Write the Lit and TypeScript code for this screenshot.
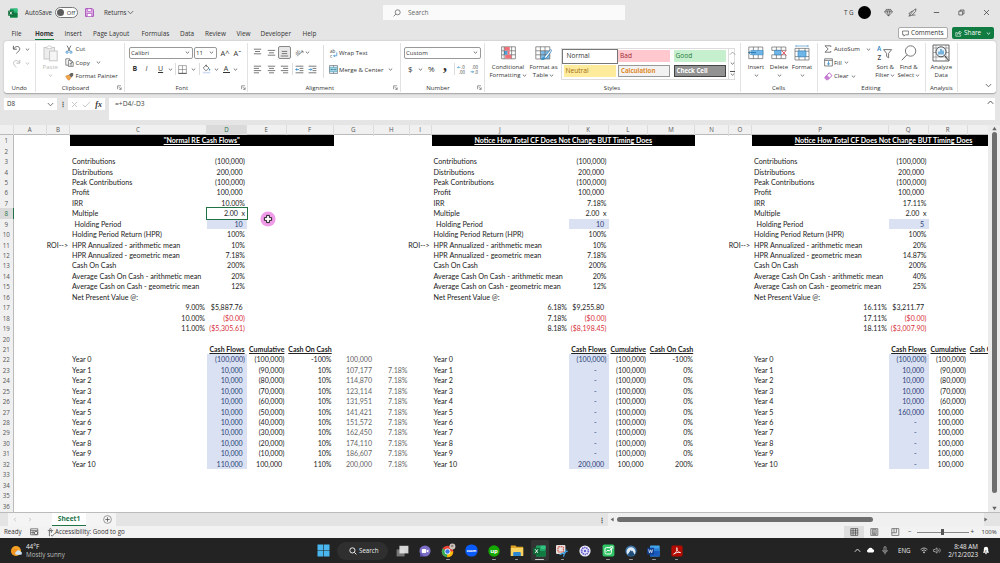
import { LitElement, html, css, svg, nothing } from 'lit';
import type { TemplateResult } from 'lit';
import { customElement, property } from 'lit/decorators.js';
import { classMap } from 'lit/directives/class-map.js';

interface Glyph {
  w: number;
  h: number;
  body: TemplateResult;
}

const G = '#5a5a5a';
const B = '#2b88c8';

const lines = (rows: number[][]) =>
  svg`${rows.map(([x1, x2, y]) => svg`<path d="M${x1} ${y}H${x2}" stroke=${G} stroke-width=".8"/>`)}`;

const GLYPHS: Record<string, Glyph> = {
  chevron: { w: 5, h: 3, body: svg`<path d="M.8 .6L2.5 2.2L4.2 .6" fill="none" stroke="#555" stroke-width=".8"/>` },
  chevronWide: { w: 7, h: 5, body: svg`<path d="M.8 1L3.5 3.8L6.2 1" fill="none" stroke="#555" stroke-width=".8"/>` },
  chevronUp: { w: 7, h: 5, body: svg`<path d="M.8 3.8L3.5 1L6.2 3.8" fill="none" stroke="currentColor" stroke-width=".9"/>` },
  excel: {
    w: 10, h: 10,
    body: svg`<rect x="2" y=".5" width="7.5" height="9" rx=".6" fill="#21a366"/><path d="M5.7 .5h3.2a.6.6 0 0 1 .6.6v2.4H5.7z" fill="#33c481"/><path d="M2 5h7.5v4.5H2z" fill="#107c41"/><rect x=".2" y="2.4" width="5.4" height="5.4" rx=".5" fill="#0e6b38"/><path d="M1.8 3.6L4 6.6M4 3.6L1.8 6.6" stroke="#fff" stroke-width=".8"/>`,
  },
  save: {
    w: 9, h: 9,
    body: svg`<path d="M.6 .6h6.6l1.2 1.2v6.6H.6z" fill="#e6b8ea" stroke="#a344b5" stroke-width=".9"/><path d="M2.4 .8h4v2.6h-4z" fill="#fff" stroke="#a344b5" stroke-width=".6"/><path d="M2.2 8.2V5.4h4.6v2.8" fill="#fff" stroke="#a344b5" stroke-width=".7"/>`,
  },
  search: { w: 8, h: 8, body: svg`<circle cx="4.7" cy="3.3" r="2.5" fill="none" stroke="#555" stroke-width=".7"/><path d="M2.9 5.1L.6 7.4" stroke="#555" stroke-width=".7"/>` },
  diamond: { w: 9, h: 9, body: svg`<path d="M2.4 1.4h4.2l1.9 2.4L4.5 8.2L.5 3.8zM.5 3.8h8M2.4 1.4l.8 2.4l1.3 4.2l1.3-4.2l.8-2.4M3.2 3.8L4.5 1.4l1.3 2.4" fill="none" stroke="#444" stroke-width=".6"/>` },
  pen: { w: 9, h: 9, body: svg`<path d="M.8 8.2L5.8 2.2L8 .8L7.6 3.4L4 7.2zM2.2 6.5L.8 5.6L4.5 2.8M4 7.2L7.4 7" fill="none" stroke="#444" stroke-width=".7"/>` },
  minimize: { w: 7, h: 7, body: svg`<path d="M.8 3.5h5.4" stroke="#444" stroke-width=".8"/>` },
  restore: { w: 7, h: 7, body: svg`<path d="M.8 2.2h3.8v3.8H.8zM2.2 2.2V1h3.8v3.8H4.8" fill="none" stroke="#444" stroke-width=".7"/>` },
  close: { w: 7, h: 7, body: svg`<path d="M1 1l5 5M6 1L1 6" stroke="#333" stroke-width=".7"/>` },
  comment: { w: 7, h: 7, body: svg`<path d="M.6 1h5.8v3.8H3.4L2 6.2V4.8H.6z" fill="none" stroke="#333" stroke-width=".6"/>` },
  share: { w: 7, h: 7, body: svg`<path d="M2.4 2.6H.8v3.6h4.8V4.6M2.2 4.4C2.4 2.8 3.4 2.2 4.6 2.2V1L6.4 2.8L4.6 4.4V3.2C3.6 3.2 2.8 3.6 2.2 4.4z" fill="none" stroke="#fff" stroke-width=".6"/>` },
  undo: { w: 10, h: 9, body: svg`<path d="M1.4 .8v3.4h3.4M1.6 4C3 1.6 5.4 .8 7 2.2C8.6 3.8 7.6 5.6 4.4 8.4" fill="none" stroke="#555" stroke-width=".9"/>` },
  redo: { w: 10, h: 9, body: svg`<path d="M7.8 .8v3.4H4.4M7.6 4C6.2 1.6 4 .8 2.4 2.2C.8 3.8 1.4 5.6 4.4 8.4" fill="none" stroke="#b9b9b9" stroke-width=".9"/>` },
  paste: { w: 15, h: 17, body: svg`<rect x="1" y="2.5" width="10.5" height="11.5" fill="#ececec" stroke="#bdbdbd" stroke-width=".9"/><path d="M3.6 3.6V1.8h1.4a1.3 1.3 0 0 1 2.6 0H9v1.8z" fill="#fff" stroke="#bdbdbd" stroke-width=".7"/><rect x="6.6" y="6" width="7.6" height="9.8" fill="#f4f4f4" stroke="#bdbdbd" stroke-width=".9"/>` },
  cut: { w: 8, h: 9, body: svg`<path d="M2 .6L5 6M6 .6L3 6" stroke="#555" stroke-width=".8"/><circle cx="2.1" cy="7.2" r="1.1" fill="none" stroke=${B} stroke-width=".8"/><circle cx="5.9" cy="7.2" r="1.1" fill="none" stroke=${B} stroke-width=".8"/>` },
  copy: { w: 9, h: 9, body: svg`<path d="M3.4 7.2H.8V.8h4v1.6M3.4 2.4h3l1.8 1.8v4.2H3.4zM6 2.6v1.8h2M4.6 5.6h2.4M4.6 7h2.4" fill="none" stroke=${G} stroke-width=".7"/>` },
  painter: { w: 9, h: 9, body: svg`<path d="M.8 4L4 3l2 2.4L4.2 8.2C2.6 7.8 1.2 6.2.8 4z" fill="#f3a64a" stroke="#c4711c" stroke-width=".5"/><path d="M4 2.8l2.4 2.8L8.2 3.4V1H5.8z" fill="#666"/>` },
  launcher: { w: 5, h: 5, body: svg`<path d="M.6 4.2V.8h3.4M2 2.2l2 2M4.2 2.4v2H2.2" fill="none" stroke="#555" stroke-width=".6"/>` },
  borders: { w: 9, h: 9, body: svg`<path d="M.6 .6h7.8v7.8H.6zM4.5 .6v7.8M.6 4.5h7.8" fill="none" stroke="#777" stroke-width=".6"/><path d="M.4 8.4h8.2" stroke="#444" stroke-width=".8"/>` },
  bucket: { w: 9, h: 10, body: svg`<path d="M4 1L7 4L4 6.8L1.2 4zM4.2 3V.6" fill="none" stroke="#555" stroke-width=".7"/><path d="M7.6 4.4c1 1.2 1 2-.1 2s-.8-1 .1-2z" fill=${B}/><path d="M.8 8.6h7.4" stroke="#cfdcf2" stroke-width="1.6"/>` },
  top: { w: 9, h: 9, body: lines([[.8, 8.2, 1.2], [2, 7, 3.5], [.8, 8.2, 5.8]]) },
  middle: { w: 9, h: 9, body: lines([[.8, 8.2, 2.4], [2, 7, 4.8], [.8, 8.2, 7.2]]) },
  bottom: { w: 9, h: 9, body: lines([[1.8, 7.2, 3.4], [1.8, 7.2, 5.6], [.8, 8.2, 8]]) },
  left: { w: 9, h: 9, body: lines([[.8, 8.2, 1.2], [.8, 6, 3.4], [.8, 8.2, 5.6], [.8, 6, 7.8]]) },
  center: { w: 9, h: 9, body: lines([[.8, 8.2, 1.2], [2, 7, 3.4], [.8, 8.2, 5.6], [2, 7, 7.8]]) },
  right: { w: 9, h: 9, body: lines([[.8, 8.2, 1.2], [3, 8.2, 3.4], [.8, 8.2, 5.6], [3, 8.2, 7.8]]) },
  orient: { w: 9, h: 9, body: svg`<text x="0" y="6" font-size="5" fill="#555" transform="rotate(-30 3 5)">ab</text><path d="M2 8.2L8 3M8 5V3H6" fill="none" stroke="#666" stroke-width=".7"/>` },
  outdent: { w: 9, h: 9, body: svg`${lines([[.6, 8.4, 1.2], [4.6, 8.4, 3.4], [4.6, 8.4, 5.6], [.6, 8.4, 7.8]])}<path d="M4 4.5H.8M2 3.2L.8 4.5L2 5.8" fill="none" stroke=${B} stroke-width=".8"/>` },
  indent: { w: 9, h: 9, body: svg`${lines([[.6, 8.4, 1.2], [4.6, 8.4, 3.4], [4.6, 8.4, 5.6], [.6, 8.4, 7.8]])}<path d="M.6 4.5h3.2M2.6 3.2L3.8 4.5L2.6 5.8" fill="none" stroke=${B} stroke-width=".8"/>` },
  wrap: { w: 9, h: 9, body: svg`<text x="1" y="4.2" font-size="4.6" fill="#444">ab</text><text x="1" y="8.8" font-size="4.6" fill="#444">c</text><path d="M7.8 3.4v3.4H4.6M5.8 5.6L4.6 6.8L5.8 8" fill="none" stroke=${B} stroke-width=".7"/>` },
  merge: { w: 9, h: 9, body: svg`<path d="M.5 .5h8v8h-8z" fill="#d4e9f7" stroke="#666" stroke-width=".6"/><path d="M4.5 .5v2M4.5 6.5v2" stroke="#666" stroke-width=".6"/><path d="M.8 2.6h7.4v3.8H.8z" fill="#bfe3f2" stroke="#2a8fa5" stroke-width=".5"/><path d="M2 4.5h5M3 3.5L2 4.5l1 1M6 3.5l1 1l-1 1" fill="none" stroke="#1b6f86" stroke-width=".6"/>` },
  decInc: { w: 9, h: 9, body: svg`<text x="4" y="4.2" font-size="4.4" fill="#444">.0</text><text x="1.8" y="8.8" font-size="4.4" fill="#444">.00</text><path d="M3.4 2.4H.6M1.6 1.4l-1 1l1 1" fill="none" stroke=${B} stroke-width=".6"/>` },
  decDec: { w: 9, h: 9, body: svg`<text x="1.8" y="4.2" font-size="4.4" fill="#444">.00</text><text x="4.4" y="8.8" font-size="4.4" fill="#444">.0</text><path d="M.6 6.8h3M2.6 5.8l1 1l-1 1" fill="none" stroke=${B} stroke-width=".7"/>` },
  conditional: {
    w: 15, h: 14,
    body: svg`<path d="M.6 .8h13.8v12H.6zM.6 4.8h13.8M.6 8.8h13.8M10.6 .8v12" fill="#fff" stroke="#666" stroke-width=".7"/><path d="M3.4 1h5.4v3.6H3.4zM4.2 9h6.2v3.6H4.2z" fill="#f07078"/><path d="M3 5h3.6v3.6H3z" fill="#4a9fd8"/><path d="M6.6 5h2v3.6h-2z" fill="#f07078"/><path d="M3.2 .8v12" stroke="#555" stroke-width=".6"/>`,
  },
  table: {
    w: 17, h: 15,
    body: svg`<path d="M.8 .8h14v12.2H.8z" fill="#fff"/><path d="M5.4 4.8h9.4V13H5.4z" fill="#7dbbe6"/><path d="M.8 .8h14v12.2H.8zM.8 4.8h14M.8 8.8h14M5.4 .8v12.2M10 .8v12.2" fill="none" stroke="#666" stroke-width=".7"/><path d="M15.8 3.4L9.8 10.4L7 13.6L11.4 12L16.6 4.8z" fill="#fff" stroke="#2276b0" stroke-width=".7"/><path d="M6 14c1-3 3-3.6 4.4-2.4c.2 1.6-1.8 2.8-4.4 2.4z" fill="#3d8fc9"/>`,
  },
  insert: {
    w: 16, h: 14,
    body: svg`<path d="M.8 1h14v11.6H.8zM5.4 1v11.6M10.2 1v11.6" fill="#fff" stroke="#666" stroke-width=".7"/><path d="M3.6 4.4H15v4.4H3.6z" fill="#6fb6e8" stroke="#2a7fba" stroke-width=".6"/><path d="M8 6.6H.8M3 4.4L.8 6.6L3 8.8" fill="none" stroke="#1f6ea8" stroke-width=".9"/>`,
  },
  remove: {
    w: 16, h: 14,
    body: svg`<path d="M.8 1h14v3.4H.8zM.8 8.8h14v3.8H.8zM5.4 1v3.4M10.2 1v3.4M5.4 8.8v3.8M10.2 8.8v3.8" fill="#fff" stroke="#666" stroke-width=".7"/><path d="M3.6 4.4h6.4v4.4H3.6z" fill="#6fb6e8" stroke="#2a7fba" stroke-width=".6"/><path d="M10.4 4.4l5 5M15.4 4.4l-5 5" stroke="#e0575f" stroke-width="1"/>`,
  },
  format: {
    w: 16, h: 16,
    body: svg`<path d="M2 1h12M2 0v2M14 0v2" stroke=${B} stroke-width=".6"/><path d="M1 3.4h14V15H1zM1 6.2h14M1 11.6h14M5 3.4V15M11 3.4V15" fill="#fff" stroke="#666" stroke-width=".7"/><path d="M4 6h8v5.8H4z" fill="#6fb6e8" stroke="#2a7fba" stroke-width=".6"/>`,
  },
  sigma: { w: 8, h: 8, body: svg`<path d="M6.8 2V.8H1L4.2 4L1 7.2h5.8V6" fill="none" stroke="#555" stroke-width=".8"/>` },
  fill: { w: 9, h: 9, body: svg`<path d="M.6 .8h7.8v7.2H.6zM.6 2.4h7.8" fill="#fff" stroke="#555" stroke-width=".7"/><path d="M4.5 3.2v3.6M3 5.4l1.5 1.4L6 5.4" fill="none" stroke=${B} stroke-width=".8"/>` },
  clear: { w: 9, h: 9, body: svg`<path d="M1 5L5.2 .8L8 3.6L3.8 7.8H2.6L1 6.2z" fill="#fff" stroke="#a13db3" stroke-width=".8"/><path d="M1 5l2-2l2.8 2.8l-2 2H2.6L1 6.2z" fill="#c77fd3"/>` },
  sort: { w: 16, h: 16, body: svg`<text x="0" y="6.2" font-size="6.4" font-weight="600" fill=${B}>A</text><text x=".4" y="15.2" font-size="6.4" font-weight="600" fill="#444">Z</text><path d="M6.6 4.6h8L11.6 8.4v4.4L9.6 11.4V8.4z" fill="#fff" stroke="#555" stroke-width=".8"/>` },
  find: { w: 16, h: 16, body: svg`<circle cx="9.6" cy="6" r="5.2" fill="none" stroke="#555" stroke-width=".8"/><path d="M6 9.8L.8 15.2" stroke="#555" stroke-width=".9"/>` },
  analyze: {
    w: 18, h: 18,
    body: svg`<path d="M1 1h16v16H1z" fill="#fff" stroke="#555" stroke-width=".9"/><path d="M1 4h16M1 8.5h16M1 13h16M4 1v16M14 1v16" stroke="#777" stroke-width=".6"/><circle cx="9" cy="7.8" r="5" fill="#eaf4fb" stroke="#444" stroke-width=".9"/><path d="M7 10.4V7.6M9 10.4V5M11 10.4V6.6" stroke="#2b88c8" stroke-width="1.2"/><path d="M12.6 11.6L16.6 16.4" stroke="#333" stroke-width="1"/>`,
  },
  cross: { w: 7, h: 7, body: svg`<path d="M1 1l5 5M6 1L1 6" stroke="#bbb" stroke-width=".8"/>` },
  check: { w: 9, h: 7, body: svg`<path d="M.8 3.8L3 6L8 .8" fill="none" stroke="#bbb" stroke-width=".8"/>` },
  plus: { w: 9, h: 9, body: svg`<circle cx="4.5" cy="4.5" r="3.9" fill="none" stroke="#777" stroke-width=".7"/><path d="M4.5 2.3v4.4M2.3 4.5h4.4" stroke="#555" stroke-width=".8"/>` },
  triLeft: { w: 4, h: 5, body: svg`<path d="M3.6 .4v4.2L.6 2.5z" fill="#666"/>` },
  triRight: { w: 4, h: 5, body: svg`<path d="M.4 .4v4.2L3.4 2.5z" fill="#666"/>` },
  triUp: { w: 5, h: 5, body: svg`<path d="M.3 4.2h4.4L2.5 .8z" fill="#666"/>` },
  triDown: { w: 5, h: 5, body: svg`<path d="M.3 .8h4.4L2.5 4.2z" fill="#666"/>` },
  navLeft: { w: 4, h: 5, body: svg`<path d="M2.8 .9L1.2 2.5L2.8 4.1" fill="none" stroke="#bbb" stroke-width=".8"/>` },
  navRight: { w: 4, h: 5, body: svg`<path d="M1.2 .9L2.8 2.5L1.2 4.1" fill="none" stroke="#bbb" stroke-width=".8"/>` },
  macro: { w: 9, h: 8, body: svg`<path d="M.6 .8h7.2v6H.6zM.6 2.6h7.2M3 2.6v4.2M.6 4.6h4" fill="none" stroke="#555" stroke-width=".7"/><circle cx="6" cy="5" r="1.7" fill="#eee" stroke="#444" stroke-width=".7"/>` },
  access: { w: 9, h: 9, body: svg`<circle cx="3.4" cy="1.4" r=".9" fill="none" stroke="#555" stroke-width=".6"/><path d="M.8 2.6h5.4M2.4 2.8v5.4M4.4 2.8v2M4 7l1.2 1.2L7.8 5.4" fill="none" stroke="#555" stroke-width=".8"/>` },
  viewNormal: { w: 9, h: 8, body: svg`<path d="M.8 .6h7v6.8h-7zM.8 2.8h7M.8 5h7M3.1 .6v6.8M5.5 .6v6.8" fill="none" stroke="#444" stroke-width=".7"/>` },
  viewLayout: { w: 9, h: 8, body: svg`<path d="M.8 .6h7v6.8h-7zM2.4 1.6h3.8v4.8H2.4zM3 3h2.6M3 4.2h2.6M3 5.4h2.6" fill="none" stroke="#555" stroke-width=".7"/>` },
  viewBreak: { w: 9, h: 8, body: svg`<path d="M.8 .6h7v6.8h-7zM.8 4.8h4.6V.6M3 .6v4.2" fill="none" stroke="#555" stroke-width=".7"/>` },
  weather: { w: 13, h: 12, body: svg`<circle cx="6" cy="6" r="5" fill="#f7a325"/><circle cx="5" cy="7" r="3.4" fill="#ef8a1a" opacity=".6"/><path d="M6.2 9.8a1.7 1.7 0 0 1 .2-3.2a2.2 2.2 0 0 1 4-.1a1.7 1.7 0 0 1 .4 3.3z" fill="#cfe3f5"/>` },
  windows: { w: 13, h: 13, body: svg`<path d="M.5 .5h5.7v5.7H.5zM6.8 .5h5.7v5.7H6.8zM.5 6.8h5.7v5.7H.5zM6.8 6.8h5.7v5.7H6.8z" fill="#49b7ee"/>` },
  searchWhite: { w: 8, h: 8, body: svg`<circle cx="3.4" cy="3.4" r="2.6" fill="none" stroke="#fff" stroke-width=".9"/><path d="M5.4 5.4L7.4 7.4" stroke="#fff" stroke-width=".9"/>` },
  taskview: { w: 13, h: 12, body: svg`<path d="M.6 4.4h8v7h-8z" fill="#777"/><path d="M3.4 .8h9v7.6h-9z" fill="#e8e8e8" opacity=".9"/>` },
  chat: { w: 12, h: 12, body: svg`<circle cx="6" cy="6" r="5.6" fill="#7b6fc8"/><path d="M.8 11.4L1.4 7.4L5 11.4z" fill="#5a4fa8"/><rect x="2.8" y="4" width="4.4" height="4" rx=".7" fill="#fff"/><path d="M7.6 5.6L9.4 4.4v3.2L7.6 6.6z" fill="#fff"/>` },
  chrome: { w: 15, h: 15, body: svg`<circle cx="6.5" cy="8.5" r="5.8" fill="#e84335"/><path d="M6.5 8.5L1.5 5.6A5.8 5.8 0 0 0 6.5 14.3z" fill="#34a853"/><path d="M6.5 8.5L12.3 8.5A5.8 5.8 0 0 1 6.2 14.3z" fill="#fbbc05"/><circle cx="6.5" cy="8.5" r="2.9" fill="#fff"/><circle cx="6.5" cy="8.5" r="2.2" fill="#3b78e7"/><circle cx="11.4" cy="3.4" r="3" fill="#cfc6bd"/><circle cx="11.2" cy="3" r="1.3" fill="#94857a"/>` },
  zoom: { w: 13, h: 13, body: svg`<rect x=".4" y=".4" width="12.2" height="12.2" rx="5.6" fill="#0b5cff"/><text x="6.5" y="7.8" text-anchor="middle" font-size="3.6" font-weight="700" fill="#fff">zoom</text>` },
  upwork: { w: 12, h: 12, body: svg`<circle cx="6" cy="6" r="5.7" fill="#14a800"/><text x="6" y="8" text-anchor="middle" font-size="6" font-weight="700" fill="#fff">up</text>` },
  explorer: { w: 14, h: 13, body: svg`<path d="M.8 1.4h4.6l1.2 1.4h6.6v9H.8z" fill="#e0a526"/><path d="M.8 4h12.4v8H.8z" fill="#f9d262"/><path d="M3.2 12V9.2a1.2 1.2 0 0 1 1.2-1.2h5.2a1.2 1.2 0 0 1 1.2 1.2V12z" fill="#2c86d0"/>` },
  excelBig: { w: 13, h: 12, body: svg`<rect x="3" y=".6" width="9.6" height="10.8" rx=".7" fill="#21a366"/><path d="M7.8 .6h4.8v3.6H7.8z" fill="#33c481"/><path d="M3 6h9.6v5.4H3z" fill="#107c41"/><rect x=".2" y="2.8" width="6.8" height="6.6" rx=".6" fill="#0e6b38"/><path d="M2.3 4.3L4.9 7.9M4.9 4.3L2.3 7.9" stroke="#fff" stroke-width=".9"/>` },
  snip: { w: 14, h: 14, body: svg`<rect x="1" y="1" width="9.4" height="9" rx="1" fill="#e6e1e0"/><rect x="3" y="2.8" width="5.4" height="5.2" rx="1" fill="none" stroke="#d24a3a" stroke-width="1.1" stroke-dasharray="1.4 .6"/><path d="M4.6 10.6L12.8 7M8.4 12.8L11 5.4" stroke="#3c9ad6" stroke-width="1.3"/>` },
  purple: { w: 12, h: 12, body: svg`<circle cx="6" cy="6" r="5.6" fill="#efeefa"/><circle cx="6" cy="6" r="3.4" fill="none" stroke="#6a62cf" stroke-width="1.8" stroke-dasharray="1.5 .6"/><circle cx="6" cy="6" r="1.3" fill="#6a62cf"/>` },
  sheetGreen: { w: 13, h: 13, body: svg`<rect x=".6" y=".6" width="11.8" height="11.8" rx="1.6" fill="#2fc565"/><rect x="3" y="3.6" width="6.4" height="6.4" rx="1.4" fill="none" stroke="#fff" stroke-width="1"/><path d="M4.4 7.6L6 6l1.2 1.2L10.4 3.4" fill="none" stroke="#fff" stroke-width="1"/><path d="M8 2.4h2.8v2.6" fill="none" stroke="#fff" stroke-width=".7"/>` },
  nord: { w: 12, h: 12, body: svg`<circle cx="6" cy="6" r="5.6" fill="#3a74a8"/><path d="M2.8 9.6A4.4 4.4 0 1 1 9.2 9.6L7.4 6.4L6.6 7.4L5.8 5.8z" fill="#dfeaf4"/><path d="M3 9.6L5.8 5l1 1.6l.6-.8l2.2 3.8A4.8 4.8 0 0 1 3 9.6z" fill="#1f4e79"/>` },
  word: { w: 13, h: 12, body: svg`<rect x="3" y=".6" width="9.6" height="10.8" rx=".7" fill="#41a5ee"/><path d="M3 3.4h9.6V6H3z" fill="#2b7cd3"/><path d="M3 6h9.6v5.4H3z" fill="#185abd"/><rect x=".2" y="2.8" width="6.8" height="6.6" rx=".6" fill="#103f91"/><path d="M1.6 4.4l.9 3.4l1.1-3l1.1 3l.9-3.4" fill="none" stroke="#fff" stroke-width=".7"/>` },
  acrobat: { w: 12, h: 12, body: svg`<rect x=".4" y=".4" width="11.2" height="11.2" rx="1.6" fill="#b30b00"/><path d="M2.6 9.2C5 8 6.6 5 5.8 2.6C5.4 5 7 7.4 9.6 7.6C7 7 4.6 7.6 2.6 9.2z" fill="none" stroke="#fff" stroke-width=".8"/>` },
  cloud: { w: 9, h: 7, body: svg`<path d="M2.2 5.6a1.8 1.8 0 0 1 0-3.4a2.6 2.6 0 0 1 4.6 0a1.8 1.8 0 0 1 .2 3.4z" fill="#fff"/>` },
  mic: { w: 6, h: 9, body: svg`<rect x="2" y=".6" width="2" height="4.6" rx="1" fill="none" stroke="#ddd" stroke-width=".6"/><path d="M.7 4a2.3 2.3 0 0 0 4.6 0M3 6.4V8.4" fill="none" stroke="#ddd" stroke-width=".6"/>` },
  wifi: { w: 8, h: 7, body: svg`<path d="M.6 2.6a5 5 0 0 1 6.8 0M1.8 3.9a3.2 3.2 0 0 1 4.4 0" fill="none" stroke="#ddd" stroke-width=".8"/><circle cx="4" cy="5.4" r=".8" fill="#ddd"/>` },
  speaker: { w: 8, h: 7, body: svg`<path d="M.6 2.5h1.4L4 .8v5.4L2 4.5H.6zM5 2.4c.7.7.7 1.5 0 2.2M6.2 1.4c1.3 1.4 1.3 2.8 0 4.2" fill="none" stroke="#ddd" stroke-width=".6"/>` },
  bell: { w: 8, h: 9, body: svg`<path d="M1 6.8L1.8 5V3a2.2 2.2 0 0 1 4.4 0v2l.8 1.8zM3 7.2a1 1 0 0 0 2 0" fill="#fff"/><text x="2.8" y="5.8" font-size="4" fill="#222">z</text>` },
};

const icon = (name: string, cls = '') => {
  const g = GLYPHS[name];
  return html`<svg class="icon ${cls}" width=${g.w} height=${g.h} viewBox="0 0 ${g.w} ${g.h}">${g.body}</svg>`;
};

const shared = css`
  :host {
    display: block;
    font-family: 'Open Sans', 'Noto Sans', sans-serif;
    font-size: 6.2px;
    line-height: 8px;
    color: #333;
    box-sizing: border-box;
  }
  * {
    box-sizing: border-box;
  }
  span {
    white-space: nowrap;
  }
  .icon {
    display: block;
    flex: none;
    overflow: visible;
  }
`;

@customElement('xl-title-bar')
export class XlTitleBar extends LitElement {
  static styles = [
    shared,
    css`
      .bar {
        height: 25px;
        display: grid;
        grid-template-columns: 17px 30px 29.5px 19.5px 23px 256px 461px 14px 26px 24px 24.5px 25px 25px auto;
        align-items: center;
        padding-left: 8px;
      }
      .toggle {
        width: 23px;
        height: 11px;
        border: 0.8px solid #777;
        border-radius: 6px;
        background: #fff;
        display: flex;
        align-items: center;
        gap: 2.5px;
        padding-left: 0.8px;
        font-size: 5.8px;
      }
      .knob {
        width: 7.5px;
        height: 7.5px;
        border-radius: 50%;
        background: #5c5c5c;
      }
      .search {
        width: 242px;
        height: 15px;
        background: #fafafa;
        display: flex;
        align-items: center;
        padding-left: 10px;
        gap: 7px;
        font-size: 6.5px;
        color: #666;
      }
      .avatar {
        width: 13px;
        height: 13px;
        border-radius: 50%;
        background: #000;
      }
    `,
  ];

  render() {
    return html`
      <div class="bar">
        ${icon('excel')}
        <span>AutoSave</span>
        <div class="toggle"><div class="knob"></div><span>Off</span></div>
        ${icon('save')}
        <span>Returns</span>
        ${icon('chevronWide')}
        <div class="search">${icon('search')}<span>Search</span></div>
        <span>T G</span>
        <div class="avatar"></div>
        ${icon('diamond')} ${icon('pen')} ${icon('minimize')} ${icon('restore')} ${icon('close')}
      </div>
    `;
  }
}

@customElement('xl-tabs')
export class XlTabs extends LitElement {
  static styles = [
    shared,
    css`
      .bar {
        height: 16px;
        display: grid;
        grid-template-columns: 23.5px 29.5px 28.5px 48.5px 38.5px 25px 31.5px 24px 42px 595.5px 54px auto;
        align-items: center;
        padding-left: 11.5px;
        font-size: 6.4px;
      }
      .tab {
        justify-self: start;
        height: 14px;
        line-height: 16px;
      }
      .active {
        font-weight: 700;
        border-bottom: 1.4px solid #107c41;
        letter-spacing: -0.1px;
      }
      .button {
        display: flex;
        align-items: center;
        height: 12.5px;
        border-radius: 2px;
        gap: 2px;
      }
      .comments {
        width: 50px;
        background: #fff;
        border: 0.8px solid #aaa;
        padding-left: 3px;
      }
      .share {
        width: 42px;
        background: #107c41;
        color: #fff;
        padding-left: 3px;
      }
      .share .icon:last-child path {
        stroke: #fff;
      }
      .share span {
        margin-right: 3px;
      }
    `,
  ];

  private _tabs = ['File', 'Home', 'Insert', 'Page Layout', 'Formulas', 'Data', 'Review', 'View', 'Developer', 'Help'];

  render() {
    return html`
      <div class="bar">
        ${this._tabs.map((t) => html`<span class=${classMap({ tab: true, active: t === 'Home' })}>${t}</span>`)}
        <div class="button comments">${icon('comment')}<span>Comments</span></div>
        <div class="button share">${icon('share')}<span>Share</span>${icon('chevron')}</div>
      </div>
    `;
  }
}

@customElement('xl-ribbon')
export class XlRibbon extends LitElement {
  static styles = [
    shared,
    css`
      :host {
        font-size: 6.05px;
      }
      .ribbon {
        margin: 0 4.5px 0 4px;
        height: 52px;
        background: #fff;
        border-radius: 3px;
        box-shadow: 0 0.5px 1.5px rgba(0, 0, 0, 0.3);
        display: grid;
        grid-template-columns: 31.5px 89px 123.5px 152.5px 84px 256px 77px 108px 32.5px 1fr;
      }
      .group {
        display: flex;
        flex-direction: column;
        border-right: 0.8px solid #e2e2e2;
        margin: 2px 0 1px;
        min-width: 0;
      }
      .body {
        height: 40.5px;
      }
      .label {
        height: 8px;
        display: flex;
        justify-content: center;
        align-items: center;
        position: relative;
      }
      .launch {
        padding-right: 8px;
      }
      .label .icon {
        position: absolute;
        right: 1.5px;
        top: 1.5px;
      }
      .row {
        display: grid;
        align-items: center;
      }
      .r3 {
        height: 13.5px;
      }
      .r2 {
        height: 16.5px;
      }
      .r2:first-child {
        margin-top: 1.5px;
      }
      .cols {
        display: flex;
      }
      .stack {
        display: flex;
        flex-direction: column;
        align-items: center;
        text-align: center;
      }
      .stack .pic {
        height: 20px;
        display: flex;
        align-items: center;
      }
      .stack .line {
        display: flex;
        align-items: center;
        gap: 1px;
        height: 8.2px;
      }
      .undo {
        grid-template-columns: 12.5px 6px;
        padding-left: 8px;
      }
      .faded {
        color: #b5b5b5;
        opacity: 0.9;
      }
      .faint {
        opacity: 0.45;
      }
      .paste {
        width: 29.5px;
      }
      .clip {
        margin-top: -0.6px;
      }
      .clip .row {
        grid-template-columns: 10.5px auto auto 1fr;
      }
      .clip .gap {
        margin-left: 6px;
      }
      .field {
        height: 12px;
        border: 0.8px solid #999;
        border-radius: 2px;
        display: flex;
        align-items: center;
        justify-content: space-between;
        padding: 0 1.5px;
        background: #fff;
      }
      .font1 {
        grid-template-columns: 65px 27px 13px auto;
        padding-left: 4px;
      }
      .font1 .field {
        margin-right: 1px;
      }
      .font1 .size {
        width: 23px;
      }
      .font1 span.big {
        font-size: 7.4px;
      }
      .font2 {
        grid-template-columns: 13px 12.5px 9.5px 7.5px 3px 12.5px 8px 3px 12px 9px 10.5px auto;
        padding-left: 8px;
        font-size: 7px;
      }
      .sep {
        width: 0.8px;
        height: 12px;
        background: #ddd;
      }
      .fontcolor {
        border-bottom: 1.6px solid #333;
        line-height: 7px;
        width: 7px;
        text-align: center;
      }
      .align1 {
        grid-template-columns: 14px 11.5px 17px 10px auto;
        padding-left: 4.5px;
      }
      .align2 {
        grid-template-columns: 14px 13.5px 11.5px 3px 13.5px auto;
        padding-left: 4.5px;
      }
      .boxed {
        width: 13px;
        height: 13px;
        border: 0.8px solid #888;
        border-radius: 2px;
        background: #e8e8e8;
        display: flex;
        align-items: center;
        justify-content: center;
      }
      .aligns {
        width: 75px;
      }
      .wraps {
        border-left: 0.8px solid #ddd;
        margin: 2px 0;
        padding-left: 4.5px;
        height: 33px;
      }
      .wraps .row {
        grid-template-columns: 10.5px auto 1fr;
        height: 16.5px;
      }
      .wraps .icon:last-child {
        margin-left: 5px;
      }
      .number .field {
        width: 77px;
      }
      .number .row {
        padding-left: 3px;
      }
      .number .num2 {
        grid-template-columns: 10px 10px 15px 10.5px 3px 13px auto;
        padding-left: 7.5px;
        font-size: 8px;
      }
      .num2 .comma {
        font: 700 16px / 5px 'Liberation Serif', serif;
        margin-top: -7px;
      }
      .gallery {
        display: grid;
        grid-template-columns: 56.5px 55.5px 54px 8px;
        grid-template-rows: 15px 15px;
        align-items: center;
        width: 174px;
        height: 32px;
        margin: 4.5px 0 0 5px;
        border: 0.8px solid #ddd;
        font-size: 6.6px;
      }
      .swatch {
        height: 11.5px;
        width: 52px;
        padding-left: 2px;
        display: flex;
        align-items: center;
      }
      .normal {
        width: 56px;
        height: 15px;
        border: 1px solid #777;
        padding-left: 4px;
      }
      .bad {
        background: #ffc7ce;
        color: #9c2a35;
      }
      .good {
        background: #c6efce;
        color: #1f7a3a;
      }
      .neutral {
        background: #ffeb9c;
        color: #9c6a10;
        margin-left: 2px;
      }
      .calc {
        background: #f2f2f2;
        color: #e08a2a;
        border: 0.8px solid #999;
        font-weight: 700;
        font-size: 6.1px;
      }
      .checkcell {
        background: #929292;
        color: #fff;
        border: 1.5px double #444;
        font-weight: 700;
        font-size: 6.1px;
      }
      .scroll {
        grid-row: 1 / 3;
        grid-column: 4;
        display: flex;
        flex-direction: column;
        justify-content: space-around;
        align-items: center;
        height: 31px;
        border-left: 0.8px solid #ddd;
      }
      .more {
        border-top: 0.7px solid #555;
        padding-top: 1px;
      }
      .cf {
        width: 47px;
      }
      .ft {
        width: 24px;
      }
      .cell {
        width: 23px;
      }
      .cells {
        padding-left: 4px;
      }
      .edit {
        width: 56px;
        padding-left: 6px;
        margin-top: -0.6px;
      }
      .edit .row {
        grid-template-columns: 10.5px auto 1fr;
      }
      .edit .icon:last-child {
        margin-left: 2px;
      }
      .edit .row:first-child .icon:last-child {
        margin-left: 6px;
      }
      .tool {
        width: 23.5px;
      }
      .end {
        display: flex;
        align-items: flex-end;
        justify-content: flex-end;
        padding: 0 4px 5px 0;
      }
    `,
  ];

  private _group(label: string, body: TemplateResult, cls = '', launcher = false) {
    return html`
      <div class="group">
        <div class="body ${cls}">${body}</div>
        <div class=${classMap({ label: true, launch: launcher })}>
          <span>${label}</span>${launcher ? icon('launcher') : nothing}
        </div>
      </div>
    `;
  }

  private _tool(pic: string, cls: string, l1: string, l2 = '') {
    return html`
      <div class="stack ${cls}">
        <div class="pic">${icon(pic)}</div>
        <div class="line"><span>${l1}</span></div>
        <div class="line">${l2 ? html`<span>${l2}</span>` : nothing}${l2 === 'Data' ? nothing : icon('chevron')}</div>
      </div>
    `;
  }

  render() {
    return html`
      <div class="ribbon">
        ${this._group('Undo', html`
          <div class="row r3 undo">${icon('undo')}${icon('chevron')}</div>
          <div class="row r3 undo">${icon('redo')}${icon('chevron', 'faint')}</div>
        `)}
        ${this._group('Clipboard', html`
          <div class="stack paste faded">
            <div class="pic">${icon('paste')}</div>
            <div class="line"><span>Paste</span></div>
            <div class="line">${icon('chevron', 'faint')}</div>
          </div>
          <div class="clip">
            <div class="row r3">${icon('cut')}<span>Cut</span></div>
            <div class="row r3">${icon('copy')}<span>Copy</span>${icon('chevron', 'gap')}</div>
            <div class="row r3">${icon('painter')}<span>Format Painter</span></div>
          </div>
        `, 'cols', true)}
        ${this._group('Font', html`
          <div class="row r2 font1">
            <div class="field"><span>Calibri</span>${icon('chevron')}</div>
            <div class="field size"><span>11</span>${icon('chevron')}</div>
            <span class="big">A^</span><span class="big">Aˇ</span>
          </div>
          <div class="row r2 font2">
            <b>B</b><i>I</i><u>U</u>${icon('chevron')}
            <div class="sep"></div>${icon('borders')}${icon('chevron')}
            <div class="sep"></div>${icon('bucket')}${icon('chevron')}
            <span class="fontcolor">A</span>${icon('chevron')}
          </div>
        `, '', true)}
        ${this._group('Alignment', html`
          <div class="aligns">
            <div class="row r2 align1">
              ${icon('top')}<div>${icon('middle')}</div>
              <div class="boxed">${icon('bottom')}</div>${icon('orient')}${icon('chevron')}
            </div>
            <div class="row r2 align2">
              ${icon('left')}${icon('center')}${icon('right')}
              <div class="sep"></div>${icon('outdent')}${icon('indent')}
            </div>
          </div>
          <div class="wraps">
            <div class="row">${icon('wrap')}<span>Wrap Text</span></div>
            <div class="row">${icon('merge')}<span>Merge &amp; Center</span>${icon('chevron')}</div>
          </div>
        `, 'cols', true)}
        ${this._group('Number', html`
          <div class="row r2"><div class="field"><span>Custom</span>${icon('chevron')}</div></div>
          <div class="row r2 num2">
            <span>$</span>${icon('chevron')}<span>%</span><span class="comma">,</span>
            <div class="sep"></div>${icon('decInc')}${icon('decDec')}
          </div>
        `, 'number', true)}
        ${this._group('Styles', html`
          ${this._tool('conditional', 'cf', 'Conditional', 'Formatting')}
          ${this._tool('table', 'ft', 'Format as', 'Table')}
          <div class="gallery">
            <div class="swatch normal">Normal</div>
            <div class="swatch bad">Bad</div>
            <div class="swatch good">Good</div>
            <div class="swatch neutral">Neutral</div>
            <div class="swatch calc">Calculation</div>
            <div class="swatch checkcell">Check Cell</div>
            <div class="scroll">
              ${icon('chevronUp', 'faint')}${icon('chevron')}
              <div class="more">${icon('chevron')}</div>
            </div>
          </div>
        `, 'cols')}
        ${this._group('Cells', html`
          ${this._tool('insert', 'cell', 'Insert')}
          ${this._tool('remove', 'cell', 'Delete')}
          ${this._tool('format', 'cell', 'Format')}
        `, 'cols cells')}
        ${this._group('Editing', html`
          <div class="edit">
            <div class="row r3">${icon('sigma')}<span>AutoSum</span>${icon('chevron')}</div>
            <div class="row r3">${icon('fill')}<span>Fill</span>${icon('chevron')}</div>
            <div class="row r3">${icon('clear')}<span>Clear</span>${icon('chevron')}</div>
          </div>
          ${this._tool('sort', 'tool', 'Sort &', 'Filter')}
          ${this._tool('find', 'tool', 'Find &', 'Select')}
        `, 'cols')}
        ${this._group('Analysis', this._tool('analyze', '', 'Analyze', 'Data'))}
        <div class="end">${icon('chevronWide')}</div>
      </div>
    `;
  }
}

@customElement('xl-formula-bar')
export class XlFormulaBar extends LitElement {
  @property({ type: String }) ref = '';
  @property({ type: String }) formula = '';

  static styles = [
    shared,
    css`
      .bar {
        display: grid;
        grid-template-columns: 53px 11px 37px 4px 1fr;
        padding: 5px 5px 0 4px;
        height: 32px;
        align-items: start;
      }
      .box {
        height: 12px;
        background: #fff;
        display: flex;
        align-items: center;
        padding: 0 3px;
        justify-content: space-between;
      }
      .dots {
        text-align: center;
        line-height: 12px;
        font-weight: 700;
      }
      .fx {
        font: italic 700 8px 'Liberation Serif', serif;
      }
      .input {
        grid-column: 5;
        height: 22px;
        background: #fff;
        display: flex;
        justify-content: space-between;
        padding: 2px 1px 0 6px;
        color: #444;
        font-size: 6.7px;
      }
    `,
  ];

  render() {
    return html`
      <div class="bar">
        <div class="box"><span>${this.ref}</span>${icon('chevronWide')}</div>
        <span class="dots">⋮</span>
        <div class="box">${icon('cross')}${icon('check')}<span class="fx">fx</span></div>
        <div class="input"><span>${this.formula}</span>${icon('chevronUp')}</div>
      </div>
    `;
  }
}

interface Cell {
  text: string;
  cls?: string;
}

interface Block {
  start: number;
  title: string;
  summary: string[];
  npv: [string, string][];
  flows: string[];
  cumulative: string[];
  coc: string[];
}

const COLUMNS = 'ABCDEFGHIJKLMNOPQRS'.split('');

const SUMMARY_LABELS = [
  'Contributions',
  'Distributions',
  'Peak Contributions',
  'Profit',
  'IRR',
  'Multiple',
  'Holding Period',
  'Holding Period Return (HPR)',
  'HPR Annualized - arithmetic mean',
  'HPR Annualized - geometric mean',
  'Cash On Cash',
  'Average Cash On Cash - arithmetic mean',
  'Average Cash on Cash - geometric mean',
  'Net Present Value @:',
];

const NOTICE = 'Notice How Total CF Does Not Change BUT Timing Does';

const BLOCKS: Block[] = [
  {
    start: 2,
    title: '"Normal RE Cash Flows"',
    summary: ['(100,000)', '200,000', '(100,000)', '100,000', '10.00%', '2.00  x', '10', '100%', '10%', '7.18%', '200%', '20%', '12%'],
    npv: [['9.00%', '$5,887.76'], ['10.00%', '($0.00)'], ['11.00%', '($5,305.61)']],
    flows: ['(100,000)', ...Array(9).fill('10,000'), '110,000'],
    cumulative: ['(100,000)', '(90,000)', '(80,000)', '(70,000)', '(60,000)', '(50,000)', '(40,000)', '(30,000)', '(20,000)', '(10,000)', '100,000'],
    coc: ['-100%', ...Array(9).fill('10%'), '110%'],
  },
  {
    start: 9,
    title: NOTICE,
    summary: ['(100,000)', '200,000', '(100,000)', '100,000', '7.18%', '2.00  x', '10', '100%', '10%', '7.18%', '200%', '20%', '12%'],
    npv: [['6.18%', '$9,255.80'], ['7.18%', '($0.00)'], ['8.18%', '($8,198.45)']],
    flows: ['(100,000)', ...Array(9).fill('-'), '200,000'],
    cumulative: [...Array(10).fill('(100,000)'), '100,000'],
    coc: ['-100%', ...Array(9).fill('0%'), '200%'],
  },
  {
    start: 15,
    title: NOTICE,
    summary: ['(100,000)', '200,000', '(100,000)', '100,000', '17.11%', '2.00  x', '5', '100%', '20%', '14.87%', '200%', '40%', '25%'],
    npv: [['16.11%', '$3,211.77'], ['17.11%', '($0.00)'], ['18.11%', '($3,007.90)']],
    flows: ['(100,000)', '10,000', '10,000', '10,000', '10,000', '160,000', '-', '-', '-', '-', '-'],
    cumulative: ['(100,000)', '(90,000)', '(80,000)', '(70,000)', '(60,000)', ...Array(6).fill('100,000')],
    coc: [],
  },
];

const GROWTH = ['100,000', '107,177', '114,870', '123,114', '131,951', '141,421', '151,572', '162,450', '174,110', '186,607', '200,000'];

function buildCells(): Map<string, Cell> {
  const cells = new Map<string, Cell>();
  const put = (col: number, row: number, text: string, cls = 'text') => cells.set(`${col}:${row}`, { text, cls });
  // accounting formats keep room on the right for a closing parenthesis
  const num = (text: string) => (/^[\d$-][\d,.]*$/.test(text) ? 'num pad' : 'num');

  for (const b of BLOCKS) {
    put(b.start, 1, b.title, 'title');
    SUMMARY_LABELS.forEach((l, i) => put(b.start, i + 3, l, l === 'Holding Period' ? 'text indent' : 'text'));
    b.summary.forEach((v, i) => put(b.start + 1, i + 3, v, i === 6 ? 'num pad input' : num(v)));
    put(b.start - 1, 11, 'ROI-->', 'num');
    b.npv.forEach(([rate, value], i) => {
      put(b.start, 17 + i, rate, 'num');
      put(b.start + 1, 17 + i, value, value.startsWith('(') ? 'num red' : 'num pad');
    });
    ['Cash Flows', 'Cumulative', 'Cash On Cash'].forEach((h, i) => put(b.start + 1 + i, 21, h, 'head'));
    b.flows.forEach((v, i) => {
      put(b.start, 22 + i, `Year ${i}`);
      put(b.start + 1, 22 + i, v, `${num(v)} input ${v === '-' ? 'dash' : ''}`);
      put(b.start + 2, 22 + i, b.cumulative[i], num(b.cumulative[i]));
      if (b.coc[i]) put(b.start + 3, 22 + i, b.coc[i], 'num');
    });
  }
  GROWTH.forEach((v, i) => {
    put(6, 22 + i, v, 'num gray');
    if (i) put(7, 22 + i, '7.18%', 'num gray');
  });
  cells.get('3:8')!.cls += ' selected';
  return cells;
}

@customElement('xl-sheet')
export class XlSheet extends LitElement {
  static styles = [
    shared,
    css`
      .frame {
        display: grid;
        grid-template-columns: 988px 12px;
        height: 387px;
        position: relative;
      }
      .sheet {
        background: #fff;
        overflow: hidden;
        height: 387px;
      }
      .line {
        display: grid;
        width: 1014.5px;
        grid-template-columns: 13.5px 33.5px 23px 137px 40px 39.5px 47px 40.5px 35.5px 22px 137.5px 39.5px 39.5px 47px 34px 23px 137px 39.5px 39.5px 47px;
        height: 10.44px;
      }
      .line > div {
        line-height: 11.5px;
        white-space: pre;
      }
      .letters {
        height: 10.2px;
        background: #f0f0f0;
        border-bottom: 0.8px solid #bbb;
      }
      .line > .letter {
        text-align: center;
        color: #555;
        line-height: 9.6px;
        border-right: 0.6px solid #dcdcdc;
      }
      .line > .on {
        background: #dadada;
        color: #217346;
        border-bottom: 1px solid #217346;
      }
      .line > .rowhead {
        background: #f0f0f0;
        text-align: center;
        color: #555;
        border-right: 0.8px solid #bbb;
        border-bottom: 0.6px solid #e0e0e0;
      }
      .line > .rowon {
        background: #dadada;
        color: #217346;
        border-right: 1.2px solid #217346;
      }
      .cell {
        font-family: Lato, Carlito, sans-serif;
        font-size: 7.05px;
        color: #222;
        padding: 0 2px;
        min-width: 0;
        height: 10.44px;
      }
      .text {
        font-size: 7.2px;
      }
      .num {
        display: flex;
        justify-content: flex-end;
      }
      .pad {
        padding-right: 4.3px;
      }
      .dash {
        padding-right: 12px;
      }
      .indent {
        padding-left: 4.5px;
      }
      .input {
        background: #d9e1f2;
        color: #2c3f78;
      }
      .red {
        color: #d8323c;
      }
      .gray {
        color: #666;
      }
      .head {
        font-weight: 700;
        text-decoration: underline;
        font-size: 7px;
        padding: 0;
        display: flex;
        justify-content: center;
      }
      .title {
        grid-column: span 4;
        background: #000;
        color: #fff;
        font-weight: 700;
        text-decoration: underline;
        text-align: center;
        font-size: 7.05px;
      }
      .selected {
        outline: 1.2px solid #217346;
        outline-offset: -0.6px;
        z-index: 1;
      }
      .vscroll {
        background: #ececec;
        display: flex;
        flex-direction: column;
        align-items: center;
        padding: 1px 0 1px 1px;
        gap: 1px;
      }
      .thumb {
        width: 5px;
        flex: 1;
        margin-bottom: 12px;
        border-radius: 3px;
        background: #6e6e6e;
      }
      .cursor {
        position: absolute;
        left: 260px;
        top: 86px;
      }
    `,
  ];

  private _cells = buildCells();

  private _row(row: number) {
    const out: TemplateResult[] = [];
    for (let col = 0; col < COLUMNS.length; col++) {
      const c = this._cells.get(`${col}:${row}`);
      out.push(html`<div class="cell ${c?.cls ?? ''}">${c?.text ?? ''}</div>`);
      if (c?.cls === 'title') col += 3;
    }
    return html`
      <div class="line">
        <div class=${classMap({ rowhead: true, rowon: row === 8 })}>${row}</div>
        ${out}
      </div>
    `;
  }

  render() {
    const rows = Array.from({ length: 36 }, (_, i) => i + 1);
    return html`
      <div class="frame">
        <div class="sheet">
          <div class="line letters">
            <div class="letter"></div>
            ${COLUMNS.map((c) => html`<div class=${classMap({ letter: true, on: c === 'D' })}>${c === 'S' ? '' : c}</div>`)}
          </div>
          ${rows.map((r) => this._row(r))}
        </div>
        <div class="vscroll">
          ${icon('triUp')}
          <div class="thumb"></div>
          ${icon('triDown')}
        </div>
        <svg class="cursor" width="16" height="16" viewBox="0 0 16 16">
          <circle cx="8" cy="8" r="7.6" fill="#ef9be8" />
          <path d="M6.6 4.4h2.8v2.2h2.2v2.8H9.4v2.2H6.6V9.4H4.4V6.6h2.2z" fill="#fff" stroke="#111" stroke-width=".9" />
        </svg>
      </div>
    `;
  }
}

@customElement('xl-footer')
export class XlFooter extends LitElement {
  static styles = [
    shared,
    css`
      .tabs {
        height: 14px;
        background: #e4e4e4;
        border-top: 0.8px solid #bbb;
        display: grid;
        grid-template-columns: 8px 44px 34px 30px 480px 12px 376px 16px;
        align-items: center;
      }
      .nav {
        height: 13px;
        background: #f4f4f4;
        display: flex;
        align-items: center;
        padding-left: 5px;
        gap: 11px;
      }
      .tab {
        height: 13px;
        background: #fff;
        border-bottom: 1.4px solid #217346;
        color: #217346;
        font-weight: 700;
        font-size: 6.6px;
        line-height: 12px;
        text-align: center;
      }
      .add {
        height: 13px;
        background: #f4f4f4;
        display: flex;
        align-items: center;
        justify-content: center;
        padding-left: 12px;
      }
      .dots {
        padding-left: 3px;
        font-weight: 700;
      }
      .track {
        height: 13px;
        background: #f0f0f0;
        display: flex;
        align-items: center;
        gap: 3px;
        padding-left: 2px;
      }
      .hthumb {
        width: 256px;
        height: 4.6px;
        border-radius: 3px;
        background: #6e6e6e;
      }
      .status {
        height: 12px;
        background: #f2f2f2;
        display: grid;
        grid-template-columns: 26px 16.5px 8.5px 789px 20.5px 21px 22.5px 8.5px 54px 11px auto;
        align-items: center;
        padding-left: 4px;
      }
      .view {
        height: 12px;
        width: 20px;
        display: flex;
        align-items: center;
        justify-content: center;
      }
      .active {
        background: #dedede;
      }
      .slider {
        width: 52px;
        height: 0.8px;
        background: #888;
        display: flex;
        align-items: center;
        justify-content: center;
      }
      .handle {
        width: 2.4px;
        height: 6px;
        background: #555;
      }
      .percent {
        font-size: 6px;
      }
    `,
  ];

  render() {
    return html`
      <div class="tabs">
        <div></div>
        <div class="nav">${icon('navLeft')}${icon('navRight')}</div>
        <div class="tab">Sheet1</div>
        <div class="add">${icon('plus')}</div>
        <div></div>
        <span class="dots">⋮</span>
        <div class="track">${icon('triLeft')}<div class="hthumb"></div></div>
        ${icon('triRight')}
      </div>
      <div class="status">
        <span>Ready</span>${icon('macro')}${icon('access')}
        <span>Accessibility: Good to go</span>
        <div class="view active">${icon('viewNormal')}</div>
        <div class="view">${icon('viewLayout')}</div>
        <div class="view">${icon('viewBreak')}</div>
        <span>−</span>
        <div class="slider"><div class="handle"></div></div>
        <span>+</span><span class="percent">100%</span>
      </div>
    `;
  }
}

@customElement('win-taskbar')
export class WinTaskbar extends LitElement {
  static styles = [
    shared,
    css`
      :host {
        color: #eee;
      }
      .bar {
        height: 25px;
        background: #232323;
        display: grid;
        grid-template-columns: 10px 16px 291px 20px 54px 299.5px 163.5px 1fr;
        align-items: center;
      }
      .weather {
        line-height: 8px;
        font-size: 6.3px;
      }
      .weather .sub {
        color: #bbb;
      }
      .pill {
        width: 51px;
        height: 18px;
        border-radius: 9px;
        background: #2f2f2f;
        display: flex;
        align-items: center;
        gap: 2.5px;
        padding-left: 11.5px;
      }
      .apps {
        display: grid;
        grid-template-columns: repeat(13, 22.87px);
      }
      .app {
        width: 22.87px;
        height: 25px;
        display: flex;
        flex-direction: column;
        align-items: center;
        justify-content: center;
        position: relative;
      }
      .running::after {
        content: '';
        position: absolute;
        bottom: 2.6px;
        width: 3.5px;
        height: 1.4px;
        border-radius: 1px;
        background: #999;
      }
      .current {
        background: #333;
        width: 18px;
        height: 21px;
        margin: 2px 2.4px;
        border-radius: 2px;
      }
      .current::after {
        width: 9px;
        bottom: 1px;
        background: #ccc;
      }
      .tray {
        display: grid;
        grid-template-columns: 11.5px 16px 16.5px 22px 13px 12px 33px auto;
        align-items: center;
      }
      .clock {
        text-align: right;
        margin-left: -10px;
        font-size: 6.3px;
      }
      .bell {
        padding-left: 4px;
      }
    `,
  ];

  private _apps = ['taskview', 'chat', 'chrome', 'zoom', 'upwork', 'explorer', 'excelBig', 'snip', 'purple', 'sheetGreen', 'nord', 'word', 'acrobat'];
  private _idle = ['taskview', 'chat', 'zoom', 'purple'];

  render() {
    return html`
      <div class="bar">
        <div></div>
        ${icon('weather')}
        <div class="weather">
          <div>44°F</div>
          <div class="sub">Mostly sunny</div>
        </div>
        ${icon('windows')}
        <div class="pill">${icon('searchWhite')}<span>Search</span></div>
        <div class="apps">
          ${this._apps.map(
            (a) => html`
              <div class=${classMap({ app: true, running: !this._idle.includes(a), current: a === 'excelBig' })}>
                ${icon(a)}
              </div>
            `
          )}
        </div>
        <div></div>
        <div class="tray">
          ${icon('chevronUp')}${icon('cloud')}${icon('mic')}<span>ENG</span>
          ${icon('wifi')}${icon('speaker')}
          <div class="clock"><div>8:48 AM</div><div>2/12/2023</div></div>
          <div class="bell">${icon('bell')}</div>
        </div>
      </div>
    `;
  }
}

@customElement('app-root')
export class AppRoot extends LitElement {
  static styles = css`
    :host {
      display: block;
      width: 1000px;
      height: 563px;
      overflow: hidden;
      background: #e5e5e5;
    }
  `;

  render() {
    return html`
      <xl-title-bar></xl-title-bar>
      <xl-tabs></xl-tabs>
      <xl-ribbon></xl-ribbon>
      <xl-formula-bar ref="D8" formula="=+D4/-D3"></xl-formula-bar>
      <xl-sheet></xl-sheet>
      <xl-footer></xl-footer>
      <win-taskbar></win-taskbar>
    `;
  }
}
